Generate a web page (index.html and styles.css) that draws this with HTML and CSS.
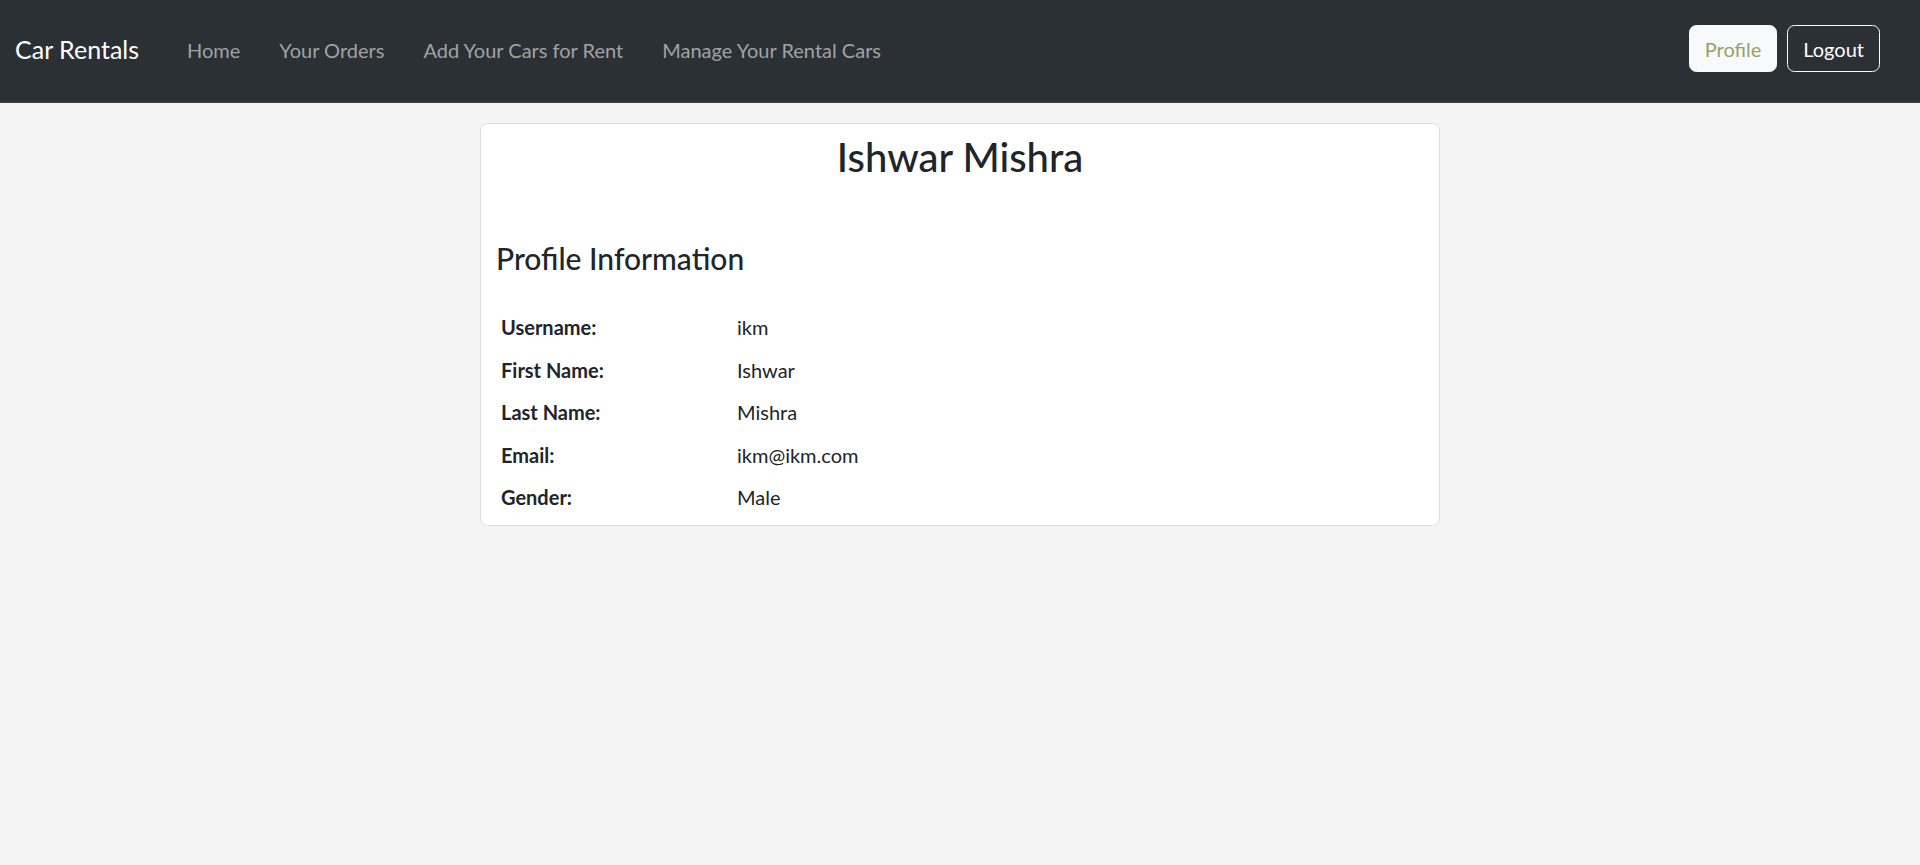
FILE: index.html
```html
<!DOCTYPE html>
<html lang="en">
<head>
<meta charset="utf-8">
<title>Car Rentals - Profile</title>
<link rel="stylesheet" href="styles.css">
</head>
<body>
<nav class="navbar">
  <a class="brand" href="#">Car Rentals</a>
  <ul class="nav-links">
    <li><a href="#">Home</a></li>
    <li><a href="#">Your Orders</a></li>
    <li><a href="#">Add Your Cars for Rent</a></li>
    <li><a href="#">Manage Your Rental Cars</a></li>
  </ul>
  <div class="nav-actions">
    <a class="btn btn-light" href="#">Profile</a>
    <button class="btn btn-outline" type="button">Logout</button>
  </div>
</nav>
<main class="page">
  <section class="card">
    <h2 class="card-title">Ishwar Mishra</h2>
    <h4 class="section-title">Profile Information</h4>
    <table class="info-table">
      <tbody>
        <tr><td class="label">Username:</td><td>ikm</td></tr>
        <tr><td class="label">First Name:</td><td>Ishwar</td></tr>
        <tr><td class="label">Last Name:</td><td>Mishra</td></tr>
        <tr><td class="label">Email:</td><td>ikm@ikm.com</td></tr>
        <tr><td class="label">Gender:</td><td>Male</td></tr>
      </tbody>
    </table>
  </section>
</main>
</body>
</html>
```

FILE: styles.css
```css
* { box-sizing: border-box; }

body {
  margin: 0;
  background: #f4f4f4;
  font-family: "Segoe UI", Lato, "Noto Sans", sans-serif;
  color: #212529;
}

.navbar {
  display: flex;
  align-items: center;
  height: 103px;
  padding: 0 40px 3px 15px;
  background: #2b3035;
  border-bottom: 1px solid #3e4348;
}

.brand {
  font-size: 25px;
  line-height: 37.5px;
  color: #ffffff;
  text-decoration: none;
}

.nav-links {
  display: flex;
  gap: 39px;
  margin: 0 0 0 48px;
  padding: 0;
  list-style: none;
}

.nav-links a {
  font-size: 20px;
  line-height: 30px;
  color: #a0a2a4;
  text-decoration: none;
}

.nav-actions {
  display: flex;
  gap: 10px;
  margin-left: auto;
  margin-top: -2px;
}

.btn {
  display: inline-block;
  font-family: inherit;
  font-size: 20px;
  line-height: 30px;
  padding: 7.5px 15px;
  border: 1px solid transparent;
  border-radius: 7.5px;
  text-decoration: none;
  cursor: pointer;
}

.btn-light {
  background: #f8f9fa;
  border-color: #f8f9fa;
  color: #94a265;
}

.btn-outline {
  background: transparent;
  border-color: #f8f9fa;
  color: #ffffff;
}

.page {
  width: 960px;
  margin: 20px auto 0;
}

.card {
  background: #ffffff;
  border: 1px solid #dcdde1;
  border-radius: 7.5px;
  padding: 9px 15px 6.5px;
}

.card-title {
  margin: 0;
  font-size: 40px;
  line-height: 48px;
  font-weight: 500;
  text-align: center;
}

.section-title {
  margin: 59.4px 0 0;
  font-size: 30px;
  line-height: 36px;
  font-weight: 500;
}

.info-table {
  width: 100%;
  margin-top: 29.6px;
  border-collapse: collapse;
}

.info-table td {
  padding: 6.25px 5px;
  font-size: 20px;
  line-height: 30px;
  text-align: left;
  vertical-align: top;
}

.info-table td.label {
  width: 236px;
  font-weight: 700;
}
```
